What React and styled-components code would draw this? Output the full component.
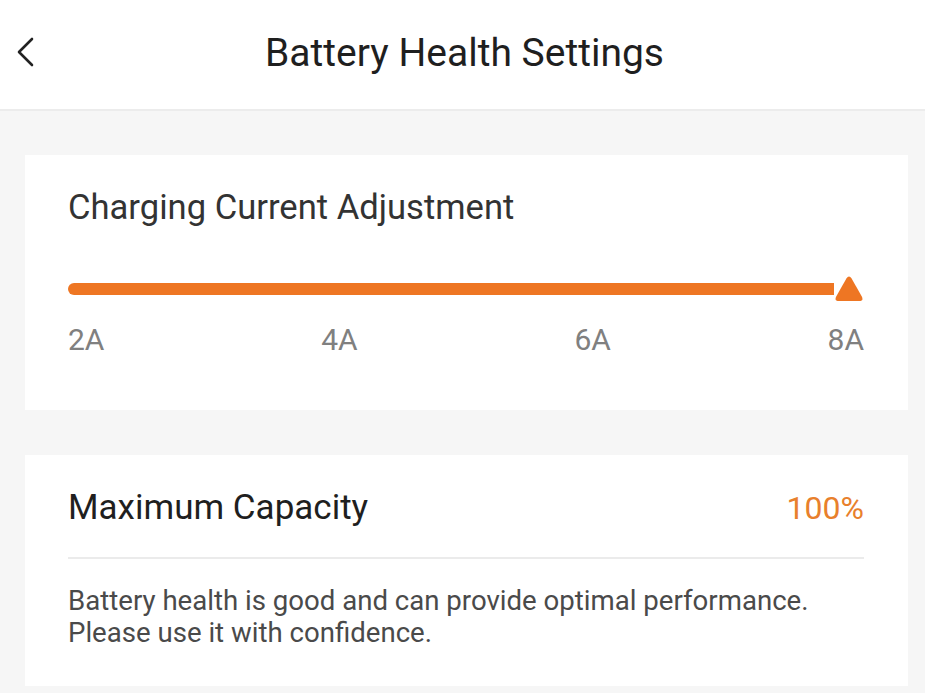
import React from "react";
import styled, { createGlobalStyle } from "styled-components";

const GlobalStyle = createGlobalStyle`
  html, body {
    margin: 0;
    padding: 0;
    background: #f6f6f6;
    font-family: Roboto, "Noto Sans", sans-serif;
  }
`;

const Page = styled.div`
  width: 925px;
  height: 693px;
  overflow: hidden;
  background: #f6f6f6;
`;

const Header = styled.header`
  height: 109px;
  display: flex;
  align-items: center;
  justify-content: center;
  position: relative;
  background: #ffffff;
  border-bottom: 2px solid #ececec;
`;

const BackButton = styled.button`
  position: absolute;
  left: 6px;
  top: 28px;
  width: 40px;
  height: 48px;
  padding: 0;
  border: none;
  background: none;
  display: flex;
  align-items: center;
  justify-content: center;
`;

const Title = styled.h1`
  margin: 0 0 4px 4px;
  font-size: 39px;
  line-height: 46px;
  font-weight: 400;
  color: #1f1f1f;
`;

const Content = styled.main`
  display: flex;
  flex-direction: column;
  gap: 45px;
  padding: 44px 17px 0 25px;
`;

const Card = styled.section`
  background: #ffffff;
  padding: ${(p) => p.$pad || "28px 44px"};
`;

const CardTitle = styled.h2`
  margin: 0;
  font-size: ${(p) => p.$size || "35px"};
  line-height: 40px;
  font-weight: 400;
  color: ${(p) => p.$color || "#333"};
`;

const SliderTrack = styled.div`
  margin-top: 47px;
  display: flex;
  align-items: center;
  height: 30px;
`;

const SliderFill = styled.div`
  flex: 1;
  height: 12px;
  border-radius: 6px 0 0 6px;
  background: #ee7623;
`;

const Ticks = styled.div`
  display: flex;
  justify-content: space-between;
  margin-top: 18px;
`;

const Tick = styled.span`
  font-size: 30px;
  line-height: 36px;
  color: #808080;
`;

const Row = styled.div`
  display: flex;
  align-items: center;
  justify-content: space-between;
  padding-bottom: 29px;
  border-bottom: 2px solid #ebebeb;
`;

const Value = styled.span`
  font-size: 32px;
  line-height: 40px;
  color: #e8802c;
`;

const Note = styled.p`
  margin: 26px 0 0;
  font-size: 27.6px;
  line-height: 32px;
  color: #4a4a4a;
`;

export default function App() {
  return (
    <Page>
      <GlobalStyle />
      <Header>
        <BackButton aria-label="Back">
          <svg width="24" height="34" viewBox="0 0 24 34">
            <path
              d="M18 4 L5 17 L18 30"
              fill="none"
              stroke="#222"
              strokeWidth="2.6"
              strokeLinecap="round"
              strokeLinejoin="round"
            />
          </svg>
        </BackButton>
        <Title>Battery Health Settings</Title>
      </Header>
      <Content>
        <Card $pad="32px 44px 52px 43px">
          <CardTitle $size="34.6px">Charging Current Adjustment</CardTitle>
          <SliderTrack>
            <SliderFill />
            <svg width="30" height="28" viewBox="0 0 30 28">
              <path
                d="M12.4 3.6 Q15 -0.4 17.6 3.6 L27.8 21.6 Q30 26 25 26 L5 26 Q0 26 2.2 21.6 Z"
                fill="#ee7623"
              />
            </svg>
          </SliderTrack>
          <Ticks>
            <Tick>2A</Tick>
            <Tick>4A</Tick>
            <Tick>6A</Tick>
            <Tick>8A</Tick>
          </Ticks>
        </Card>
        <Card $pad="33px 44px 37px 43px">
          <Row>
            <CardTitle $color="#1f1f1f">Maximum Capacity</CardTitle>
            <Value>100%</Value>
          </Row>
          <Note>
            Battery health is good and can provide optimal performance.
            <br />
            Please use it with confidence.
          </Note>
        </Card>
      </Content>
    </Page>
  );
}
